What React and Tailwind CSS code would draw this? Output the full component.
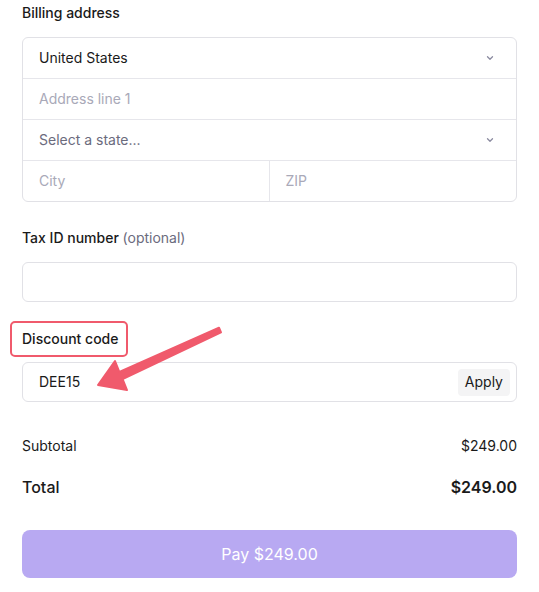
import React, { useState } from "react";

const Chevron = () => (
  <svg width="12" height="12" viewBox="0 0 12 12" fill="none" className="text-[#8b8ba0]">
    <path d="M3.5 4.75 6 7.25l2.5-2.5" stroke="currentColor" strokeWidth="1.3" strokeLinecap="round" strokeLinejoin="round" />
  </svg>
);

const App = () => {
  const [code, setCode] = useState("DEE15");

  return (
    <div className="relative w-[539px] min-h-[592px] bg-white px-[22px] pt-[3px] text-[#1a1a1a]" style={{ fontFamily: "Inter, 'Noto Sans', sans-serif" }}>
      <div className="text-sm leading-5 font-medium">Billing address</div>

      <div className="mt-[14px] rounded-md border border-[#e1e1e6] text-sm">
        <div className="flex h-[41px] items-center justify-between border-b border-[#e6e6eb] pl-4 pr-5">
          <span>United States</span>
          <Chevron />
        </div>
        <div className="flex h-[41px] items-center border-b border-[#e6e6eb] px-4 text-[#a9a9b8]">Address line 1</div>
        <div className="flex h-[41px] items-center justify-between border-b border-[#e6e6eb] pl-4 pr-5">
          <span className="text-[#6b6b7d]">Select a state...</span>
          <Chevron />
        </div>
        <div className="grid h-10 grid-cols-2 text-[#a9a9b8]">
          <div className="flex items-center border-r border-[#e6e6eb] px-4">City</div>
          <div className="flex items-center px-4">ZIP</div>
        </div>
      </div>

      <div className="mt-[26px] text-sm leading-5 font-medium">
        Tax ID number <span className="font-normal text-[#6b6b7d]">(optional)</span>
      </div>
      <div className="mt-[14px] h-10 rounded-md border border-[#e1e1e6]"></div>

      <div className="relative mt-[27px] text-sm leading-5 font-medium">
        <div className="absolute -left-3 -top-2 h-9 w-[118px] rounded-[5px] border-2 border-[#f05a6c]"></div>
        Discount code
      </div>
      <div className="mt-[13px] flex h-10 items-center justify-between rounded-md border border-[#e1e1e6] pl-4 pr-[6px] text-sm">
        <span>{code}</span>
        <button onClick={() => setCode("")} className="h-[27px] rounded bg-[#f4f4f5] px-[7px] text-sm">Apply</button>
      </div>

      <div className="mt-[34px] flex justify-between text-sm leading-5">
        <span>Subtotal</span>
        <span>$249.00</span>
      </div>
      <div className="mt-[19px] flex justify-between text-base leading-6">
        <span className="font-medium">Total</span>
        <span className="font-semibold">$249.00</span>
      </div>

      <button className="mt-[31px] h-12 w-full rounded-lg bg-[#b8a9f2] text-base text-white">Pay $249.00</button>

      {/* annotation arrow */}
      <svg className="pointer-events-none absolute left-0 top-0" width="539" height="592" viewBox="0 0 539 592">
        <polygon
          points="98,385 115,361 119.4,372 219,327.7 221,332.3 122.6,379 127,390"
          fill="#f05a6c"
          stroke="#f05a6c"
          strokeWidth="2"
          strokeLinejoin="round"
        />
      </svg>
    </div>
  );
};

export default App;
